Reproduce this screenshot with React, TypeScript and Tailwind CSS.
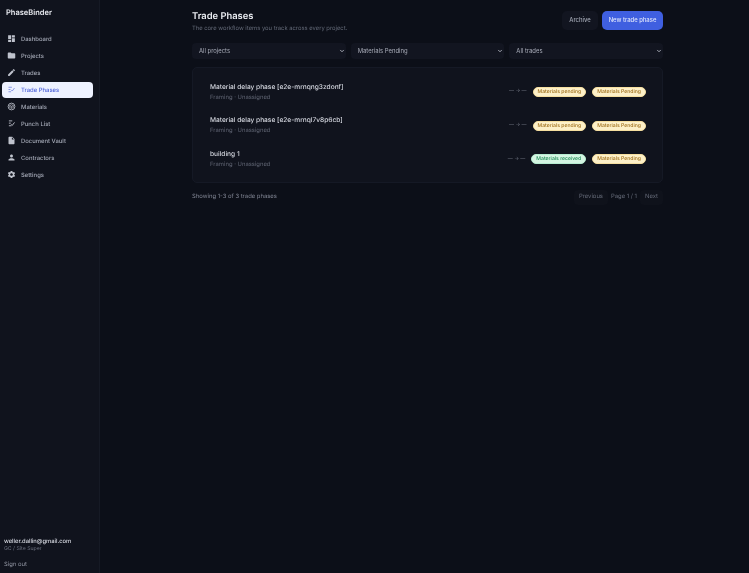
import { MdDashboard, MdFolder, MdEdit, MdInsertDriveFile, MdPerson, MdSettings } from "react-icons/md";
import { LuChevronDown } from "react-icons/lu";
import type { ComponentType } from "react";

function PhasesIcon({ className }: { className?: string }) {
  return (
    <svg viewBox="0 0 24 24" fill="none" stroke="currentColor" strokeWidth="2" className={className}>
      <path d="M4 6h9M4 12h5M4 18h7" />
      <path d="M11 13l3 3 6-8" />
    </svg>
  );
}

function PunchIcon({ className }: { className?: string }) {
  return (
    <svg viewBox="0 0 24 24" fill="none" stroke="currentColor" strokeWidth="2.4" className={className}>
      <path d="M5 5h9M5 11h5M5 18h7" />
      <path d="M11 14l3 3 6-8" />
    </svg>
  );
}

function MaterialsIcon({ className }: { className?: string }) {
  return (
    <svg viewBox="0 0 24 24" fill="none" stroke="currentColor" strokeWidth="2.2" className={className}>
      <circle cx="12" cy="12" r="9" />
      <path d="M12 7l5 2.6v5L12 17l-5-2.4v-5zM7 9.6l5 2.4 5-2.4M12 12v5" strokeWidth="1.6" />
    </svg>
  );
}

const NAV: { label: string; icon: ComponentType<{ className?: string }>; active?: boolean }[] = [
  { label: "Dashboard", icon: MdDashboard },
  { label: "Projects", icon: MdFolder },
  { label: "Trades", icon: MdEdit },
  { label: "Trade Phases", icon: PhasesIcon, active: true },
  { label: "Materials", icon: MaterialsIcon },
  { label: "Punch List", icon: PunchIcon },
  { label: "Document Vault", icon: MdInsertDriveFile },
  { label: "Contractors", icon: MdPerson },
  { label: "Settings", icon: MdSettings },
];

const ROWS = [
  { title: "Material delay phase [e2e-mrnqng3zdonf]", received: false },
  { title: "Material delay phase [e2e-mrnql7v8p6cb]", received: false },
  { title: "building 1", received: true },
];

const pill = "rounded-full border px-[4px] pt-[1px] h-[10px] flex items-center text-[5.1px] font-medium leading-none";
const amber = "bg-[#fdf0c8] border-[#f6dfa0] text-[#a0701c]";
const green = "bg-[#d4f5e2] border-[#b6ecd0] text-[#1f8a55]";

export default function App() {
  return (
    <div className="h-[573px] w-[749px] overflow-hidden bg-[#10131d]">
      <div className="flex h-full w-full bg-[#0c0f18] font-['Inter',sans-serif] [filter:blur(0.3px)] [text-rendering:geometricPrecision]">
        <aside className="flex w-[100px] shrink-0 flex-col border-r border-[#161a25] bg-[#10131d]">
          <div className="h-[30.5px] px-[6px] pt-[9px] text-[7.5px] font-semibold leading-[8px] text-[#e8eaf0]">PhaseBinder</div>
          <nav className="flex flex-col gap-[1px] pl-[2px] pr-[6px]">
            {NAV.map((n) => {
              const Icon = n.icon;
              return (
                <div
                  key={n.label}
                  className={
                    "flex h-[16px] items-center gap-[5px] rounded-[4px] pl-[5px] text-[5.9px] font-medium " +
                    (n.active ? "bg-[#eef2ff] text-[#4a5fd8]" : "text-[#a4a9b6]")
                  }
                >
                  <Icon className={"h-[9px] w-[9px] shrink-0 " + (n.active ? "text-[#6a7bdc]" : "text-[#bfc3cd]")} />
                  <span className="mt-[3px]">{n.label}</span>
                </div>
              );
            })}
          </nav>
          <div className="mt-auto px-[4px] pb-[4px]">
            <div className="text-[5.8px] font-medium leading-[8px] text-[#d8dbe3]">weller.dallin@gmail.com</div>
            <div className="text-[5.2px] leading-[7px] text-[#6e7381]">GC / Site Super</div>
            <div className="mt-[8px] text-[5.9px] leading-[8px] text-[#9095a2]">Sign out</div>
          </div>
        </aside>

        <main className="flex-1 pl-[92px] pt-[11px]">
          <div className="w-[471px]">
            <header className="flex items-start justify-between">
              <div>
                <h1 className="text-[9.4px] font-semibold leading-[11px] text-[#eceef3]">Trade Phases</h1>
                <p className="mt-[3px] text-[5.85px] leading-[8px] text-[#646a78]">
                  The core workflow items you track across every project.
                </p>
              </div>
              <div className="flex gap-[4px]">
                <button className="h-[19px] w-[36px] rounded-[5px] bg-[#121520] text-[5.9px] font-medium text-[#a4a9b6]">Archive</button>
                <button className="h-[19px] w-[61px] rounded-[5px] bg-[#3f5fe0] text-[5.9px] font-medium text-[#dfe5fb]">New trade phase</button>
              </div>
            </header>

            <div className="mt-[10px] grid grid-cols-3 gap-[5px]">
              {["All projects", "Materials Pending", "All trades"].map((s) => (
                <div key={s} className="relative">
                  <select
                    defaultValue={s}
                    className="block h-[16px] w-full appearance-none rounded-[4px] bg-[#121520] pl-[7px] text-[5.9px] text-[#a9adb9] outline-none"
                  >
                    <option>{s}</option>
                  </select>
                  <LuChevronDown className="pointer-events-none absolute right-[1px] top-[5px] h-[6px] w-[6px] text-[#b8bcc6]" strokeWidth={3.5} />
                </div>
              ))}
            </div>

            <section className="mt-[8px] flex h-[116px] flex-col gap-[3.7px] rounded-[5px] border border-[#151925] bg-[#10131d] pl-[17px] pr-[16px] pt-[9px]">
              {ROWS.map((r) => (
                <div key={r.title} className="flex h-[30px] items-center justify-between">
                  <div>
                    <div className="text-[6.6px] font-medium leading-[9px] text-[#d4d7df]">{r.title}</div>
                    <div className="mt-[2px] text-[5.9px] leading-[8px] text-[#5f6472]">Framing · Unassigned</div>
                  </div>
                  <div className="flex items-center gap-[6px]">
                    <span className="text-[5px] text-[#7a7f8c]">— → —</span>
                    <span className={pill + " " + (r.received ? green : amber)}>
                      {r.received ? "Materials received" : "Materials pending"}
                    </span>
                    <span className={pill + " " + amber}>Materials Pending</span>
                  </div>
                </div>
              ))}
            </section>

            <footer className="mt-[7px] flex items-center justify-between">
              <span className="text-[5.9px] text-[#808593]">Showing 1-3 of 3 trade phases</span>
              <div className="flex items-center text-[5.9px] text-[#666b79]">
                <span className="rounded-[4px] bg-[#0f121b] px-[5px] py-[3px]">Previous</span>
                <span className="px-[3px]">Page 1 / 1</span>
                <span className="rounded-[4px] bg-[#0f121b] px-[5px] py-[3px]">Next</span>
              </div>
            </footer>
          </div>
        </main>
      </div>
    </div>
  );
}
